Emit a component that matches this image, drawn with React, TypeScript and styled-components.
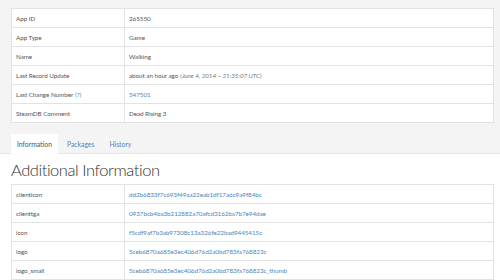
import React from 'react'
import styled, { createGlobalStyle } from 'styled-components'

const GlobalStyle = createGlobalStyle`
  html, body {
    margin: 0;
    padding: 0;
    background: #ffffff;
    font-family: Lato, "Open Sans", "Liberation Sans", sans-serif;
    color: #555;
  }
`

const Page = styled.div`
  height: 280px;
  overflow: hidden;
`

const Header = styled.div`
  background: #f4f4f4;
  padding: 8px 6px 0 11px;
  border-bottom: 1px solid #e4e4e4;
`

const Table = styled.div`
  display: grid;
  grid-template-columns: 113px 1fr;
  background: #fff;
  border: 1px solid #e2e2e2;
  border-bottom: none;
`

const Cell = styled.div<{ $key?: boolean }>`
  height: 18px;
  display: flex;
  align-items: center;
  padding-left: 4px;
  font-size: 6.3px;
  letter-spacing: -0.05px;
  color: #555;
  white-space: nowrap;
  overflow: hidden;
  border-bottom: 1px solid #e2e2e2;
  border-right: ${({ $key }) => ($key ? '1px solid #e2e2e2' : 'none')};
`

const Link = styled.a`
  color: #4a86bd;
  text-decoration: none;
`

const Muted = styled.i`
  color: #777;
  margin-left: 2px;
`

const Tabs = styled.div`
  display: flex;
  margin-top: 11px;
  height: 19px;
`

const Tab = styled.div<{ $active?: boolean }>`
  display: flex;
  align-items: center;
  padding: 0 6px;
  margin-right: 3px;
  font-size: 6.8px;
  background: ${({ $active }) => ($active ? '#fff' : 'transparent')};
  color: ${({ $active }) => ($active ? '#555' : '#4a86bd')};
  margin-bottom: -1px;
`

const Content = styled.div`
  padding: 4px 6px 0 11px;
`

const Title = styled.h1`
  margin: 0 0 2px 0;
  font-size: 16.5px;
  letter-spacing: -0.45px;
  line-height: 24px;
  font-weight: 300;
  color: #333;
`

const top: [string, React.ReactNode][] = [
  ['App ID', '265550'],
  ['App Type', 'Game'],
  ['Name', 'Walking'],
  ['Last Record Update', <>about an hour ago <Muted>(June 4, 2014 – 21:35:07 UTC)</Muted></>],
  ['Last Change Number', <Link>547501</Link>],
  ['SteamDB Comment', 'Dead Rising 3'],
]

const extra: [string, string][] = [
  ['clienticon', 'dd2b6833f7c693f49aa22eab1df17a6c9a9f84bc'],
  ['clienttga', '0937bcb4ba3b212882a70afcd3162ba7b7e94dae'],
  ['icon', 'f5cdf9af7b3ab97308c13a326fe22bad9445415c'],
  ['logo', '5ceb6870a685e3ec406d76d2a0bd783fa768823c'],
  ['logo_small', '5ceb6870a685e3ec406d76d2a0bd783fa768823c_thumb'],
  ['', ''],
]

export default function App() {
  return (
    <Page>
      <GlobalStyle />
      <Header>
        <Table>
          {top.map(([k, v]) => (
            <React.Fragment key={k}>
              <Cell $key>
                {k}
                {k === 'Last Change Number' && <Link style={{ marginLeft: 2 }}>(?)</Link>}
              </Cell>
              <Cell>{v}</Cell>
            </React.Fragment>
          ))}
        </Table>
        <Tabs>
          <Tab $active>Information</Tab>
          <Tab>Packages</Tab>
          <Tab>History</Tab>
        </Tabs>
      </Header>
      <Content>
        <Title>Additional Information</Title>
        <Table>
          {extra.map(([k, v], i) => (
            <React.Fragment key={i}>
              <Cell $key>{k}</Cell>
              <Cell>
                <Link>{v}</Link>
              </Cell>
            </React.Fragment>
          ))}
        </Table>
      </Content>
    </Page>
  )
}
